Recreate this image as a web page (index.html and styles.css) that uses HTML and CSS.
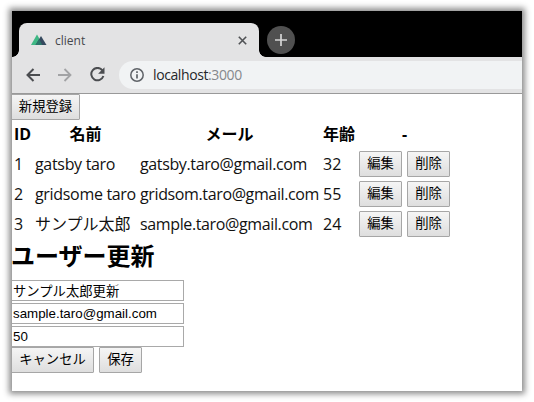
FILE: index.html
```html
<!DOCTYPE html>
<html lang="ja">
<head>
<meta charset="utf-8">
<title>client</title>
<link rel="stylesheet" href="styles.css">
</head>
<body>
<div class="window">
  <div class="tabs">
    <div class="tab">
      <svg class="logo" width="16" height="12" viewBox="0 0 16 12"><path d="M0 11 6 0.5 12 11z" fill="#3fb884"/><path d="M4.5 11 10 2l5.5 9z" fill="#35495e"/><path d="M4.5 11 8.2 5l3 6z" fill="#2c7569"/></svg>
      <span class="tab-title">client</span>
      <svg class="close" width="9" height="9" viewBox="0 0 9 9"><path d="M.8.8l7.4 7.4M8.2.8.8 8.2" stroke="#505255" stroke-width="1.6"/></svg>
    </div>
    <div class="new-tab"><svg width="12" height="12" viewBox="0 0 12 12"><path d="M6 0v12M0 6h12" stroke="#d5d5d5" stroke-width="1.7"/></svg></div>
  </div>
  <div class="toolbar">
    <svg width="14" height="14" viewBox="0 0 14 14"><path d="M14 7H1.6M7.5 1 1.5 7l6 6" fill="none" stroke="#4b4d50" stroke-width="2"/></svg>
    <svg width="14" height="14" viewBox="0 0 14 14"><path d="M0 7h12.4M6.5 1l6 6-6 6" fill="none" stroke="#a2a3a5" stroke-width="1.8"/></svg>
    <svg width="15" height="15" viewBox="0 0 15 15"><path d="M12.4 3.3A6.2 6.2 0 1 0 13.4 9" fill="none" stroke="#4b4d50" stroke-width="2"/><path d="M14.5.3v6.4H8.1z" fill="#4b4d50"/></svg>
    <div class="address">
      <svg width="14" height="14" viewBox="0 0 14 14"><circle cx="7" cy="7" r="6.2" fill="none" stroke="#5f6368" stroke-width="1.5"/><path d="M7 6.2v4.4M7 3.2v1.7" stroke="#5f6368" stroke-width="1.7"/></svg>
      <span class="url">localhost<span class="port">:3000</span></span>
    </div>
  </div>
  <main class="page">
    <button class="btn create">新規登録</button>
    <div class="users">
      <div class="row head"><b>ID</b><b>名前</b><b>メール</b><b>年齢</b><b>-</b></div>
      <div class="row"><span>1</span><span class="name">gatsby taro</span><span class="mail">gatsby.taro@gmail.com</span><span>32</span><div class="actions"><button class="btn">編集</button><button class="btn">削除</button></div></div>
      <div class="row"><span>2</span><span class="name">gridsome taro</span><span class="mail">gridsom.taro@gmail.com</span><span>55</span><div class="actions"><button class="btn">編集</button><button class="btn">削除</button></div></div>
      <div class="row"><span>3</span><span class="kana">サンプル太郎</span><span class="mail">sample.taro@gmail.com</span><span>24</span><div class="actions"><button class="btn">編集</button><button class="btn">削除</button></div></div>
    </div>
    <h2>ユーザー更新</h2>
    <div class="form">
      <input value="サンプル太郎更新">
      <input value="sample.taro@gmail.com">
      <input value="50">
    </div>
    <div class="form-actions"><button class="btn cancel">キャンセル</button><button class="btn">保存</button></div>
  </main>
</div>
</body>
</html>
```
FILE: styles.css
```css
* { box-sizing: border-box; }
body {
  margin: 0;
  padding: 11px 12px;
  height: 402px;
  overflow: hidden;
  background: #fff;
  font-family: "Open Sans", "Noto Sans CJK JP", sans-serif;
}
.window {
  width: 510px;
  height: 380px;
  overflow: hidden;
  background: #fff;
  box-shadow: 0 0 6px 3px rgba(0, 0, 0, .45);
}
.tabs {
  display: flex;
  height: 46px;
  padding: 12px 0 0 7px;
  background: #000;
}
.tab {
  position: relative;
  display: flex;
  align-items: center;
  width: 240px;
  height: 34px;
  padding: 0 12px;
  border-radius: 8px 8px 0 0;
  background: #e3e3e4;
}
.tab::before,
.tab::after {
  content: "";
  position: absolute;
  bottom: 0;
  width: 7px;
  height: 7px;
}
.tab::before {
  right: 100%;
  background: radial-gradient(circle at 0 0, #000 6.5px, #e3e3e4 7.2px);
}
.tab::after {
  left: 100%;
  background: radial-gradient(circle at 100% 0, #000 6.5px, #e3e3e4 7.2px);
}
.tab-title {
  flex: 1;
  margin-left: 8px;
  font-size: 12px;
  color: #45484c;
}
.new-tab {
  display: flex;
  align-items: center;
  justify-content: center;
  width: 28px;
  height: 28px;
  margin: 3px 0 0 8px;
  border-radius: 50%;
  background: #505050;
}
.toolbar {
  display: flex;
  align-items: center;
  gap: 18px;
  height: 37px;
  padding: 0 0 1px 14px;
  border-bottom: 1px solid #999;
  background: #e3e3e4;
}
.toolbar > svg { flex: none; }
.address {
  display: flex;
  align-items: center;
  flex: 1;
  height: 28px;
  margin-left: -4px;
  padding-left: 11px;
  border-radius: 14px 0 0 14px;
  background: #f1f3f4;
}
.url {
  margin-left: 9px;
  font-size: 14px;
  letter-spacing: -.4px;
  color: #25272a;
}
.port { color: #85888c; }
.page { height: 297px; }
.btn {
  display: block;
  width: 43px;
  height: 26px;
  padding: 0 0 2px;
  border: 1px solid #a6a6a6;
  border-radius: 1px;
  background: linear-gradient(#f5f5f5, #dedede);
  font: 13.33px/20px "Noto Sans CJK JP", sans-serif;
  color: #000;
  white-space: nowrap;
}
.create { width: 69px; margin-left: -1px; }
.users { padding: 1px 0 0 2px; }
.row {
  display: grid;
  grid-template-columns: 17px 101px 179px 32px 91px;
  column-gap: 4px;
  align-items: center;
  height: 30px;
  font-size: 16px;
  line-height: 24px;
  color: #111;
  white-space: nowrap;
}
.head { height: 28px; padding-bottom: 2px; text-align: center; color: #000; }
.name { letter-spacing: -.32px; }
.mail { letter-spacing: -.37px; }
.actions { display: flex; gap: 5px; }
h2 {
  height: 36px;
  margin: 0 0 0 -1px;
  font-size: 24px;
  line-height: 34px;
  color: #000;
}
.form {
  display: flex;
  flex-direction: column;
  gap: 2px;
  width: 173px;
  margin: 5px 0 0 -1px;
}
input {
  width: 173px;
  height: 21px;
  padding: 0 1px 1px;
  border: 1px solid #a9a9a9;
  font: 13.33px "Liberation Sans", "Noto Sans CJK JP", sans-serif;
  color: #000;
}
.form-actions { display: flex; gap: 5px; margin-left: -1px; }
.cancel { width: 83px; }
```
